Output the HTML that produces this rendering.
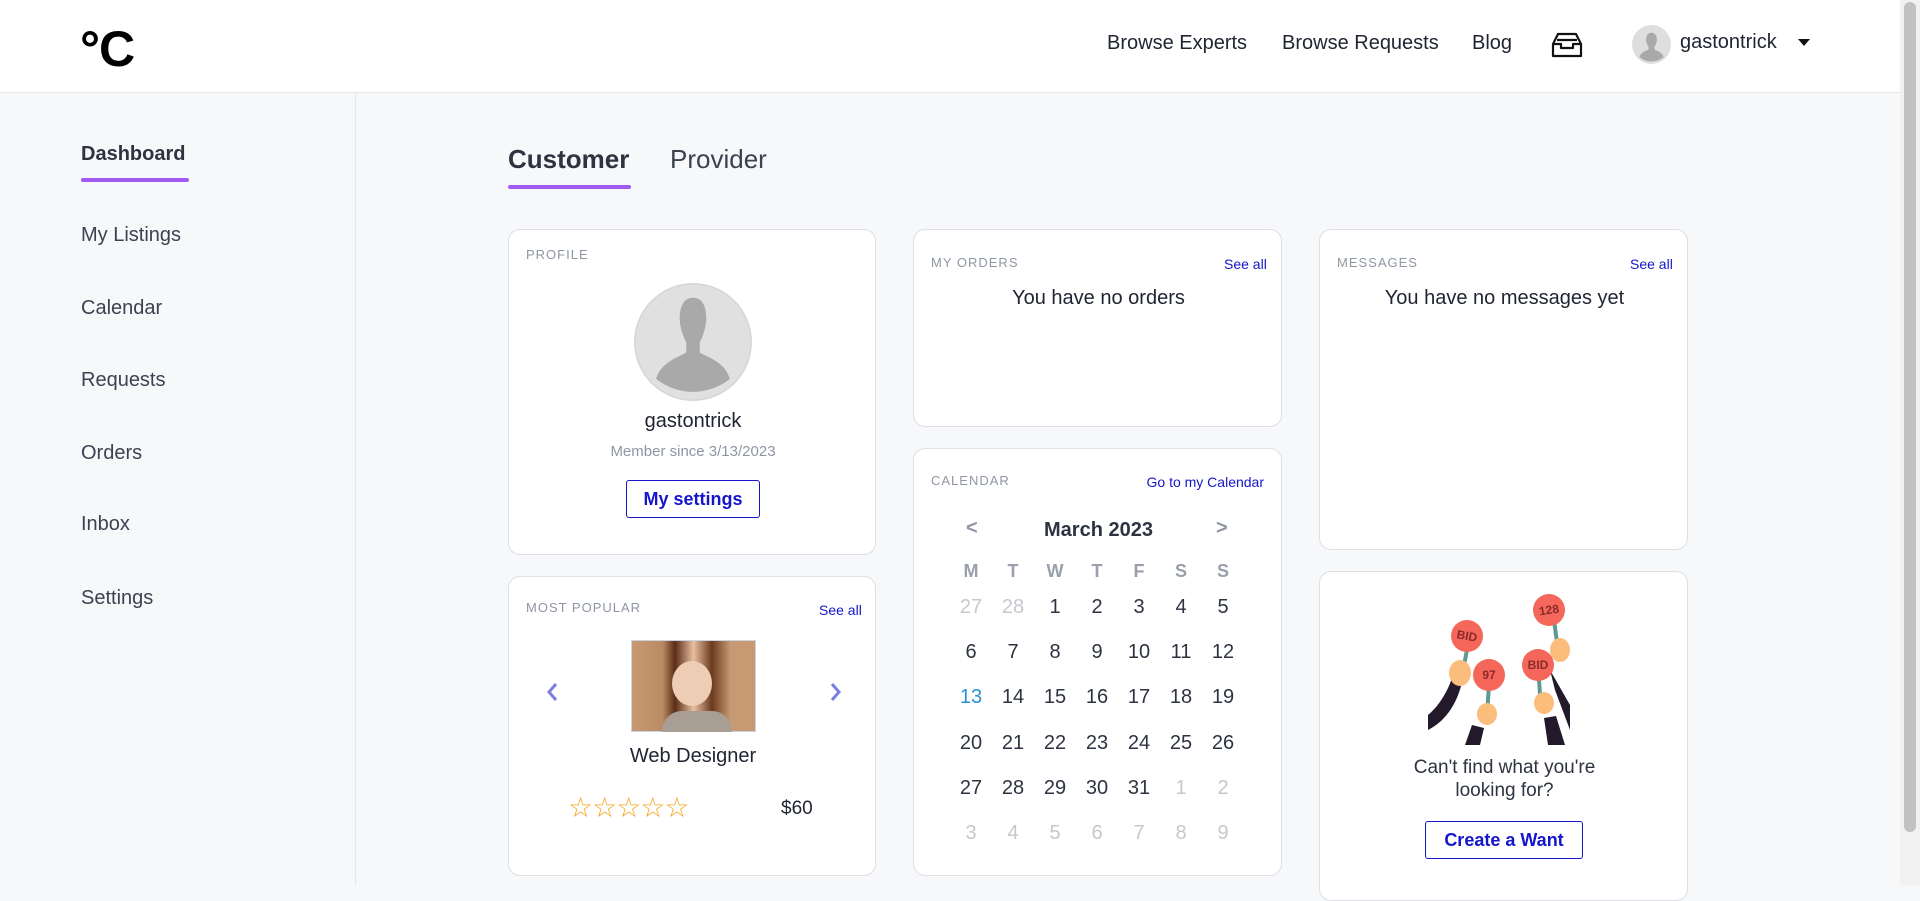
<!DOCTYPE html>
<html><head><meta charset="utf-8"><style>
*{box-sizing:border-box;margin:0;padding:0}
body{width:1920px;height:885px;overflow:hidden;background:#f7f8fa;font-family:"Liberation Sans",sans-serif;color:#2d3340;position:relative}
.a{position:absolute;white-space:nowrap}
.hdr{position:absolute;left:0;top:0;width:1900px;height:93px;background:#fff;border-bottom:1px solid #e6e8ec}
.sb{position:absolute;left:1900px;top:0;width:20px;height:885px;background:#f1f1f1}
.sb div{position:absolute;left:4px;top:2px;width:12px;height:830px;background:#c1c1c1;border-radius:6px}
.side{position:absolute;left:0;top:93px;width:356px;height:792px;border-right:1px solid #e3e6ea}
.nav{font-size:20px;color:#3b4250}
.card{position:absolute;background:#fff;border:1px solid #dedfe3;border-radius:12px}
.lbl{font-size:13px;color:#8f96a3;letter-spacing:1px}
.lnk{font-size:14px;color:#1515cc}
.btn{position:absolute;border:1px solid #1515cc;border-radius:3px;color:#1515cc;font-weight:bold;font-size:18px;text-align:center;background:#fff}
.grid{position:absolute;display:grid;grid-template-columns:repeat(7,42px);text-align:center;font-size:20px}
.grid span{height:45.2px;line-height:45.2px}
.g{color:#c5c8ce}
</style></head><body>
<div class="hdr">
 <div class="a" style="left:80px;top:20px;font-size:50px;font-weight:bold;color:#000;letter-spacing:-1px">°C</div>
 <div class="a" style="left:1107px;top:32px;font-size:20px;color:#1f2430">Browse Experts</div>
 <div class="a" style="left:1282px;top:32px;font-size:20px;color:#1f2430">Browse Requests</div>
 <div class="a" style="left:1472px;top:32px;font-size:20px;color:#1f2430">Blog</div>
 <svg class="a" style="left:1550px;top:31px" width="34" height="28" viewBox="0 0 34 28" fill="none" stroke="#111" stroke-width="2.2" stroke-linejoin="round"><path d="M3 13 L8 3 H26 L31 13 V25 H3 Z"/><path d="M3 13 H11 V17 H23 V13 H31"/><path d="M7 9 H27"/></svg>
 <svg class="a" style="left:1632px;top:25px" width="39" height="39" viewBox="0 0 40 40"><circle cx="20" cy="20" r="20" fill="#dedede"/><path d="M20 8c-4 0-5.5 3.5-5.5 7 0 3 1.5 6 2.5 7.5v2.5c-2 1.5-8 2.5-9.5 8a20 20 0 0 0 25 0c-1.5-5.5-7.5-6.5-9.5-8v-2.5c1-1.5 2.5-4.5 2.5-7.5 0-3.5-1.5-7-5.5-7z" fill="#a9a9a9"/></svg>
 <div class="a" style="left:1680px;top:31px;font-size:20px;color:#1f2430">gastontrick</div>
 <div class="a" style="left:1798px;top:39px;width:0;height:0;border-left:6px solid transparent;border-right:6px solid transparent;border-top:7px solid #111"></div>
</div>
<div class="sb"><div></div></div>
<div class="side"></div>
<div class="a nav" style="left:81px;top:143px;font-weight:bold;color:#2d3340">Dashboard</div>
<div class="a" style="left:81px;top:178px;width:108px;height:4px;background:#a25bf0;border-radius:2px"></div>
<div class="a nav" style="left:81px;top:224px">My Listings</div>
<div class="a nav" style="left:81px;top:297px">Calendar</div>
<div class="a nav" style="left:81px;top:369px">Requests</div>
<div class="a nav" style="left:81px;top:442px">Orders</div>
<div class="a nav" style="left:81px;top:513px">Inbox</div>
<div class="a nav" style="left:81px;top:587px">Settings</div>

<div class="a" style="left:508px;top:144px;font-size:26px;font-weight:bold;color:#2d3340">Customer</div>
<div class="a" style="left:670px;top:144px;font-size:26px;color:#3b4250">Provider</div>
<div class="a" style="left:508px;top:185px;width:123px;height:4px;background:#a25bf0;border-radius:2px"></div>

<div class="card" style="left:508px;top:229px;width:368px;height:326px">
 <div class="a lbl" style="left:17px;top:17px">PROFILE</div>
 <svg class="a" style="left:125px;top:53px" width="118" height="118" viewBox="0 0 40 40"><circle cx="20" cy="20" r="20" fill="#e0e0e0"/><circle cx="20" cy="20" r="19.7" fill="none" stroke="#d4d4d4" stroke-width=".4"/><path d="M20 5c-3.5 0-4.5 3.5-4.5 7 0 3 1.3 6.5 2.2 8v3.5c-2 1.5-8.5 3-10.2 9a20 20 0 0 0 25 0c-1.7-6-8.2-7.5-10.2-9V20c.9-1.5 2.2-5 2.2-8 0-3.5-1-7-4.5-7z" fill="#a9a9a9"/></svg>
 <div class="a" style="left:0;width:368px;text-align:center;top:180px;font-size:20px;color:#1f2430">gastontrick</div>
 <div class="a" style="left:0;width:368px;text-align:center;top:213px;font-size:15px;color:#8f96a3">Member since 3/13/2023</div>
 <div class="btn" style="left:117px;top:250px;width:134px;height:38px;line-height:36px">My settings</div>
</div>

<div class="card" style="left:508px;top:576px;width:368px;height:300px">
 <div class="a lbl" style="left:17px;top:23px">MOST POPULAR</div>
 <div class="a lnk" style="left:310px;top:25px">See all</div>
 <div class="a" style="left:122px;top:63px;width:125px;height:92px;border:1px solid #c9d3e3;background:linear-gradient(90deg,#c99a72 0%,#b98b64 25%,#5a2d17 35%,#e8bfa0 50%,#6b3a1e 65%,#c69a74 80%,#c99a72 100%)"><div style="position:absolute;left:40px;top:20px;width:40px;height:45px;border-radius:50%;background:#eecdb5"></div><div style="position:absolute;left:30px;top:70px;width:70px;height:21px;background:#a89e94;border-radius:20px 20px 0 0"></div></div>
 <svg class="a" style="left:36px;top:104px" width="14" height="22" viewBox="0 0 14 22"><path d="M11 3 L4 11 L11 19" fill="none" stroke="#7b7fe0" stroke-width="3"/></svg>
 <svg class="a" style="left:320px;top:104px" width="14" height="22" viewBox="0 0 14 22"><path d="M3 3 L10 11 L3 19" fill="none" stroke="#7b7fe0" stroke-width="3"/></svg>
 <div class="a" style="left:0;width:368px;text-align:center;top:168px;font-size:20px;color:#1f2430">Web Designer</div>
 <div class="a" style="left:59px;top:214px;font-size:28px;color:#f5a623;letter-spacing:-1px">☆☆☆☆☆</div>
 <div class="a" style="left:272px;top:221px;font-size:19px;color:#1f2430">$60</div>
</div>

<div class="card" style="left:913px;top:229px;width:369px;height:198px">
 <div class="a lbl" style="left:17px;top:25px">MY ORDERS</div>
 <div class="a lnk" style="left:310px;top:26px">See all</div>
 <div class="a" style="left:0;width:369px;text-align:center;top:57px;font-size:20px;color:#1f2430">You have no orders</div>
</div>

<div class="card" style="left:913px;top:448px;width:369px;height:428px">
 <div class="a lbl" style="left:17px;top:24px">CALENDAR</div>
 <div class="a lnk" style="right:17px;top:25px">Go to my Calendar</div>
 <div class="a" style="left:52px;top:68px;font-size:20px;color:#8f96a3;font-weight:bold">&lt;</div>
 <div class="a" style="left:0;width:369px;text-align:center;top:70px;font-size:20px;font-weight:bold;color:#2d3340">March 2023</div>
 <div class="a" style="left:302px;top:68px;font-size:20px;color:#8f96a3;font-weight:bold">&gt;</div>
 <div class="grid" style="left:36px;top:100px;font-size:18px;font-weight:bold;color:#9aa0ab"><span>M</span><span>T</span><span>W</span><span>T</span><span>F</span><span>S</span><span>S</span></div>
 <div class="grid" style="left:36px;top:136px;color:#2d3340">
  <span class="g">27</span><span class="g">28</span><span>1</span><span>2</span><span>3</span><span>4</span><span>5</span>
  <span>6</span><span>7</span><span>8</span><span>9</span><span>10</span><span>11</span><span>12</span>
  <span style="color:#2a8fd6">13</span><span>14</span><span>15</span><span>16</span><span>17</span><span>18</span><span>19</span>
  <span>20</span><span>21</span><span>22</span><span>23</span><span>24</span><span>25</span><span>26</span>
  <span>27</span><span>28</span><span>29</span><span>30</span><span>31</span><span class="g">1</span><span class="g">2</span>
  <span class="g">3</span><span class="g">4</span><span class="g">5</span><span class="g">6</span><span class="g">7</span><span class="g">8</span><span class="g">9</span>
 </div>
</div>

<div class="card" style="left:1319px;top:229px;width:369px;height:321px">
 <div class="a lbl" style="left:17px;top:25px">MESSAGES</div>
 <div class="a lnk" style="left:310px;top:26px">See all</div>
 <div class="a" style="left:0;width:369px;text-align:center;top:57px;font-size:20px;color:#1f2430">You have no messages yet</div>
</div>

<div class="card" style="left:1319px;top:571px;width:369px;height:330px">
 <div class="a" style="left:0;width:369px;text-align:center;top:184px;font-size:19px;line-height:23px;color:#2d3340;white-space:normal">Can't find what you're<br>looking for?</div>
 <div class="btn" style="left:105px;top:249px;width:158px;height:38px;line-height:36px">Create a Want</div>
</div>
<svg class="a" style="left:1420px;top:590px" width="160" height="155" viewBox="0 0 160 155">
 <path d="M8 125 C20 115 28 100 32 88 L42 92 C38 110 28 130 8 140 Z" fill="#221a2b"/>
 <path d="M45 155 L52 135 L64 138 L60 155 Z" fill="#221a2b"/>
 <path d="M130 80 L150 115 L150 140 L135 100 Z" fill="#221a2b"/>
 <path d="M128 155 L124 128 L136 126 L145 155 Z" fill="#221a2b"/>
 <g stroke="#5d9a94" stroke-width="4"><line x1="47" y1="60" x2="40" y2="95"/><line x1="69" y1="95" x2="67" y2="125"/><line x1="134" y1="30" x2="138" y2="60"/><line x1="119" y1="90" x2="121" y2="118"/></g>
 <g fill="#fbbd7c"><ellipse cx="40" cy="83" rx="11" ry="13"/><ellipse cx="67" cy="124" rx="10" ry="11"/><ellipse cx="140" cy="60" rx="10" ry="12"/><ellipse cx="124" cy="113" rx="10" ry="11"/></g>
 <g fill="#f4675a"><circle cx="47" cy="46" r="16"/><circle cx="69" cy="85" r="16"/><circle cx="129" cy="20" r="16"/><circle cx="118" cy="75" r="16"/></g>
 <g fill="#8a2a2a" font-family="Liberation Sans" font-weight="bold" font-size="12" text-anchor="middle"><text x="47" y="50" transform="rotate(10 47 46)">BID</text><text x="69" y="89">97</text><text x="129" y="24" transform="rotate(-8 129 20)">128</text><text x="118" y="79">BID</text></g>
</svg>
</body></html>
